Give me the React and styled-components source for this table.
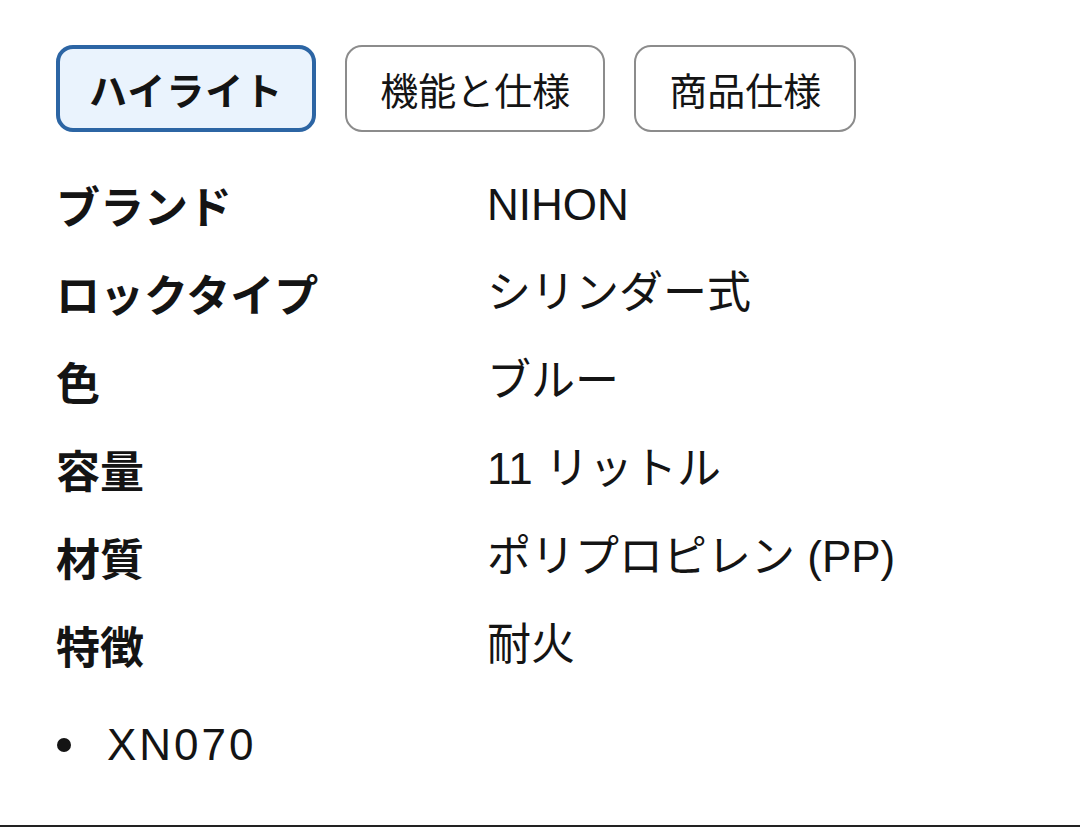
import React from 'react'
import styled, { createGlobalStyle } from 'styled-components'

const GlobalStyle = createGlobalStyle`
  html, body {
    margin: 0;
    padding: 0;
    background: #fff;
  }
  body {
    font-family: "Liberation Sans", "Noto Sans CJK JP", sans-serif;
    color: #141414;
  }
`

const Page = styled.div`
  box-sizing: border-box;
  min-height: 100vh;
  padding: 45px 0 0 56px;
  border-bottom: 2px solid #222;
`

// ----- Tabs
const TabBar = styled.div`
  display: flex;
  gap: 29px;
`

const Tab = styled.button`
  box-sizing: border-box;
  height: 87px;
  padding: ${p => (p.active ? '0 29px' : '0 33px')};
  border-radius: 17px;
  font-family: "Noto Sans CJK JP", sans-serif;
  font-size: 38px;
  line-height: 1;
  color: #141414;
  cursor: pointer;
  background: ${p => (p.active ? '#eaf3fd' : '#fff')};
  border: ${p => (p.active ? '4px solid #2c65a4' : '2.5px solid #8c8c8c')};
  font-weight: ${p => (p.active ? 700 : 400)};
  letter-spacing: ${p => (p.active ? '1px' : '0')};
`

// ----- Spec table
const Specs = styled.dl`
  display: grid;
  grid-template-columns: 431px 1fr;
  grid-auto-rows: 88px;
  align-items: center;
  margin: 29px 0 0 0;
`

const Label = styled.dt`
  font-family: "Noto Sans CJK JP", sans-serif;
  font-weight: 700;
  font-size: 44px;
  line-height: 1;
`

const Value = styled.dd`
  margin: 0;
  font-size: 44px;
  line-height: 1;
`

// ----- Bullets
const List = styled.ul`
  list-style: none;
  margin: 12px 0 0 0;
  padding: 0;
`

const Item = styled.li`
  display: flex;
  align-items: center;
  height: 88px;
  font-size: 44px;
  letter-spacing: 3px;
  &::before {
    content: '';
    width: 14px;
    height: 14px;
    margin: 0 36px 0 1px;
    border-radius: 50%;
    background: #141414;
  }
`

const tabs = ['ハイライト', '機能と仕様', '商品仕様']

const specs = [
  ['ブランド', 'NIHON'],
  ['ロックタイプ', 'シリンダー式'],
  ['色', 'ブルー'],
  ['容量', '11 リットル'],
  ['材質', 'ポリプロピレン (PP)'],
  ['特徴', '耐火'],
]

export default function App() {
  return (
    <Page>
      <GlobalStyle />
      <TabBar>
        {tabs.map((t, i) => <Tab key={t} active={i === 0}>{t}</Tab>)}
      </TabBar>
      <Specs>
        {specs.map(([k, v]) => (
          <React.Fragment key={k}>
            <Label>{k}</Label>
            <Value>{v}</Value>
          </React.Fragment>
        ))}
      </Specs>
      <List>
        <Item>XN070</Item>
      </List>
    </Page>
  )
}
